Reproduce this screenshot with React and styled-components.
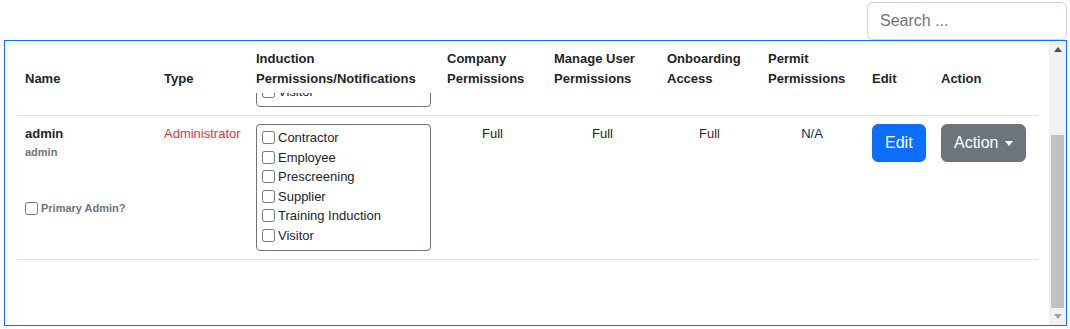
import React from "react";
import styled, { createGlobalStyle } from "styled-components";

const inductionTypes = [
  "Contractor",
  "Employee",
  "Prescreening",
  "Supplier",
  "Training Induction",
  "Visitor",
];

const columns = [
  { key: "name", label: ["Name"], width: 139 },
  { key: "type", label: ["Type"], width: 92 },
  { key: "induction", label: ["Induction", "Permissions/Notifications"], width: 191 },
  { key: "company", label: ["Company", "Permissions"], width: 107 },
  { key: "manage", label: ["Manage User", "Permissions"], width: 113 },
  { key: "onboarding", label: ["Onboarding", "Access"], width: 101 },
  { key: "permit", label: ["Permit", "Permissions"], width: 104 },
  { key: "edit", label: ["Edit"], width: 69 },
  { key: "action", label: ["Action"], width: 105 },
];

const GlobalStyle = createGlobalStyle`
  * { box-sizing: border-box; }
  body {
    margin: 0;
    background: #fff;
    color: #212529;
    font-family: "Liberation Sans", Arial, sans-serif;
  }
`;

const Page = styled.div`
  padding: 2px 3px 0 4px;
`;

const Toolbar = styled.div`
  display: flex;
  justify-content: flex-end;
`;

const SearchInput = styled.input`
  width: 200px;
  height: 38px;
  padding: 6px 12px;
  border: 1px solid #ced4da;
  border-radius: 6px;
  font-family: inherit;
  font-size: 16px;
  color: #212529;
  outline: none;
  &::placeholder { color: #6c757d; }
`;

const Panel = styled.div`
  display: flex;
  height: 286px;
  border: 1px solid #0d6efd;
`;

const ScrollArea = styled.div`
  flex: 1;
  padding: 0 10px 0 12px;
  overflow: hidden;
`;

const Table = styled.table`
  width: 1021px;
  table-layout: fixed;
  border-collapse: collapse;
  font-size: 13px;
  line-height: 19.5px;
`;

const Th = styled.th`
  padding: 8px 8px 0;
  height: 47px;
  text-align: left;
  vertical-align: bottom;
  font-weight: 700;
  white-space: nowrap;
`;

const Tr = styled.tr`
  border-bottom: 1px solid #dee2e6;
`;

const Td = styled.td`
  padding: ${(p) => (p.$stub ? "5px 8px 8px" : "8px")};
  vertical-align: top;
  text-align: ${(p) => (p.$center ? "center" : "left")};
  color: ${(p) => p.$color || "#212529"};
`;

const UserName = styled.div`
  font-weight: 700;
`;

const UserSub = styled.div`
  font-size: 11px;
  line-height: 16.5px;
  font-weight: 700;
  color: #6c757d;
`;

const PrimaryLabel = styled.label`
  display: flex;
  align-items: center;
  margin-top: 39px;
  font-size: 11px;
  font-weight: 700;
  color: #6c757d;
`;

const Check = styled.input.attrs({ type: "checkbox" })`
  width: 13px;
  height: 13px;
  margin: 0 3px 0 0;
  flex: none;
`;

/* the first row sits mostly under the header, only its list's foot shows */
const ListClip = styled.div`
  height: 14px;
  overflow: hidden;
  display: flex;
  flex-direction: column;
  justify-content: flex-end;
`;

const ListBox = styled.div`
  flex: none;
  width: 100%;
  padding: 3px 5px 5px;
  border: 1px solid #6c757d;
  border-radius: 4px;
  font-size: 13px;
  line-height: 19.5px;
`;

const ListItem = styled.label`
  display: flex;
  align-items: center;
  white-space: nowrap;
`;

const Button = styled.button`
  display: inline-flex;
  align-items: center;
  height: 38px;
  padding: 6px 12px;
  border: 1px solid ${(p) => p.$bg};
  border-radius: 6px;
  background: ${(p) => p.$bg};
  color: #fff;
  font-family: inherit;
  font-size: 16px;
  line-height: 24px;
  cursor: pointer;
`;

const Caret = styled.span`
  display: inline-block;
  margin-left: 7px;
  border-top: 5px solid #fff;
  border-left: 4.5px solid transparent;
  border-right: 4.5px solid transparent;
`;

const ScrollTrack = styled.div`
  width: 17px;
  display: flex;
  flex-direction: column;
  background: #f1f1f1;
`;

const ScrollArrow = styled.div`
  height: 17px;
  display: flex;
  align-items: center;
  justify-content: center;
  &::after {
    content: "";
    border-left: 4px solid transparent;
    border-right: 4px solid transparent;
    ${(p) =>
      p.$down
        ? "border-top: 5px solid #a3a3a3;"
        : "border-bottom: 5px solid #505050;"}
  }
`;

const ScrollGap = styled.div`
  height: 77px;
`;

const ScrollThumb = styled.div`
  flex: 1;
  margin: 0 2px;
  background: #c1c1c1;
`;

const InductionList = () => (
  <ListBox>
    {inductionTypes.map((t) => (
      <ListItem key={t}>
        <Check />
        {t}
      </ListItem>
    ))}
  </ListBox>
);

export default function App() {
  return (
    <Page>
      <GlobalStyle />
      <Toolbar>
        <SearchInput placeholder="Search ..." />
      </Toolbar>
      <Panel>
        <ScrollArea>
          <Table>
            <colgroup>
              {columns.map((c) => (
                <col key={c.key} style={{ width: c.width }} />
              ))}
            </colgroup>
            <thead>
              <tr>
                {columns.map((c) => (
                  <Th key={c.key}>
                    {c.label.map((l, i) => (
                      <div key={i}>{l}</div>
                    ))}
                  </Th>
                ))}
              </tr>
            </thead>
            <tbody>
              <Tr>
                <Td $stub />
                <Td $stub />
                <Td $stub>
                  <ListClip>
                    <InductionList />
                  </ListClip>
                </Td>
                <Td $stub />
                <Td $stub />
                <Td $stub />
                <Td $stub />
                <Td $stub />
                <Td $stub />
              </Tr>
              <Tr>
                <Td>
                  <UserName>admin</UserName>
                  <UserSub>admin</UserSub>
                  <PrimaryLabel>
                    <Check />
                    Primary Admin?
                  </PrimaryLabel>
                </Td>
                <Td $color="#dc3545">Administrator</Td>
                <Td>
                  <InductionList />
                </Td>
                <Td $center>Full</Td>
                <Td $center>Full</Td>
                <Td $center $color="#58151c">Full</Td>
                <Td $center $color="#052c65">N/A</Td>
                <Td>
                  <Button $bg="#0d6efd">Edit</Button>
                </Td>
                <Td>
                  <Button $bg="#6c757d">
                    Action
                    <Caret />
                  </Button>
                </Td>
              </Tr>
            </tbody>
          </Table>
        </ScrollArea>
        <ScrollTrack>
          <ScrollArrow />
          <ScrollGap />
          <ScrollThumb />
          <ScrollArrow $down />
        </ScrollTrack>
      </Panel>
    </Page>
  );
}
